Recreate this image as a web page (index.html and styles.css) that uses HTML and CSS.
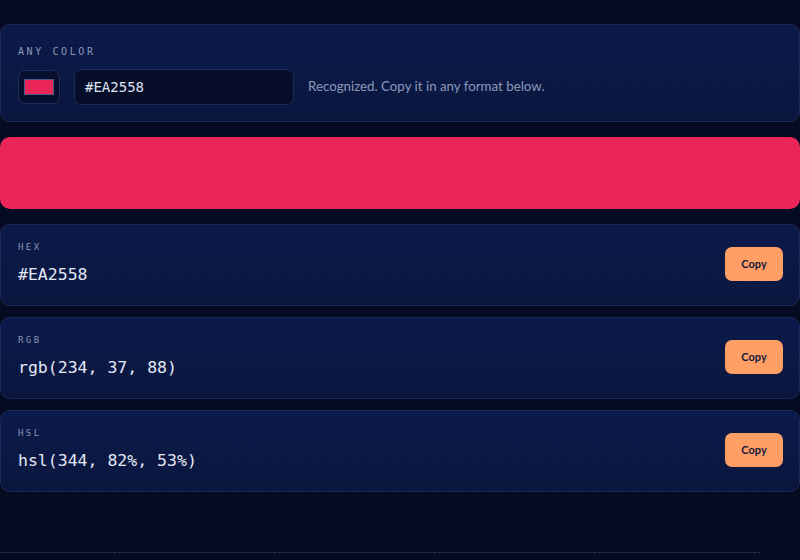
FILE: index.html
```html
<!DOCTYPE html>
<html>
<head>
<meta charset="utf-8">
<link rel="stylesheet" href="styles.css">
</head>
<body>
<main class="page">
  <section class="card input-card">
    <div class="label">ANY COLOR</div>
    <div class="input-row">
      <div class="swatch-box"><div class="swatch"></div></div>
      <div class="text-input">#EA2558</div>
      <div class="hint">Recognized. Copy it in any format below.</div>
    </div>
  </section>

  <div class="preview"></div>

  <div class="values">
    <section class="card value-card">
      <div class="value-text">
        <div class="label small">HEX</div>
        <div class="value">#EA2558</div>
      </div>
      <button class="copy">Copy</button>
    </section>
    <section class="card value-card">
      <div class="value-text">
        <div class="label small">RGB</div>
        <div class="value">rgb(234, 37, 88)</div>
      </div>
      <button class="copy">Copy</button>
    </section>
    <section class="card value-card">
      <div class="value-text">
        <div class="label small">HSL</div>
        <div class="value">hsl(344, 82%, 53%)</div>
      </div>
      <button class="copy">Copy</button>
    </section>
  </div>

  <div class="ruler">
    <span class="tick"></span><span class="tick"></span><span class="tick"></span><span class="tick"></span><span class="tick"></span>
  </div>
</main>
</body>
</html>
```

FILE: styles.css
```css
html, body {
  margin: 0;
  padding: 0;
  background: #050c22;
  height: 100%;
  overflow: hidden;
}

.page {
  padding-top: 24px;
  display: flex;
  flex-direction: column;
  font-family: "DejaVu Sans Mono", monospace;
}

.card {
  box-sizing: border-box;
  border: 1px solid #1b2958;
  border-radius: 10px;
  background:
    radial-gradient(circle, rgba(60, 80, 150, 0.16) 0.6px, transparent 1px) 0 0 / 5px 5px,
    linear-gradient(180deg, #0b1a4b 0%, #0a163d 100%);
}

.input-card {
  height: 98px;
  padding: 21px 17px 0 17px;
}

.label {
  font-size: 10px;
  line-height: 12px;
  letter-spacing: 2.6px;
  color: #8c96b6;
}

.label.small {
  font-size: 9px;
  letter-spacing: 2.4px;
}

.input-row {
  display: flex;
  align-items: center;
  margin-top: 11px;
}

.swatch-box {
  box-sizing: border-box;
  width: 42px;
  height: 34px;
  border: 1px solid #1f2e5e;
  border-radius: 7px;
  background: #070f2c;
  display: flex;
  align-items: center;
  justify-content: center;
}

.swatch {
  width: 30px;
  height: 16px;
  background: #ea2558;
  border: 1px solid #4b5a86;
  box-sizing: border-box;
}

.text-input {
  box-sizing: border-box;
  width: 220px;
  height: 36px;
  margin-left: 14px;
  border: 1px solid #1b2a58;
  border-radius: 7px;
  background: #060e2a;
  color: #dfe4f2;
  font-size: 14px;
  line-height: 34px;
  padding-left: 10px;
}

.hint {
  margin-left: 14px;
  font-family: "Lato", "Noto Sans", sans-serif;
  font-size: 13.3px;
  color: #8d99bb;
  margin-top: -2px;
}

.preview {
  margin-top: 15px;
  height: 72px;
  border-radius: 10px;
  background: #ea2558;
}

.values {
  margin-top: 15px;
  display: flex;
  flex-direction: column;
  gap: 11px;
}

.value-card {
  height: 82px;
  padding: 0 16px 0 17px;
  display: flex;
  align-items: center;
  justify-content: space-between;
}

.value-text {
  align-self: flex-start;
  padding-top: 16px;
  display: flex;
  flex-direction: column;
  gap: 12px;
}

.value {
  font-size: 16.5px;
  line-height: 20px;
  color: #e3e8f5;
}

.copy {
  width: 58px;
  height: 34px;
  border: none;
  border-radius: 7px;
  background: #ff9f66;
  color: #141a3c;
  font-family: "Lato", "Noto Sans", sans-serif;
  font-weight: 700;
  font-size: 11px;
  cursor: pointer;
  margin-top: -3px;
}

.ruler {
  margin-top: 60px;
  width: 760px;
  height: 1px;
  background: #1c2746;
  display: flex;
  justify-content: flex-end;
  gap: 159px;
  padding-right: 5px;
  box-sizing: border-box;
}

.tick {
  width: 1px;
  height: 3px;
  margin-top: -1px;
  background: #2a3558;
}
```
